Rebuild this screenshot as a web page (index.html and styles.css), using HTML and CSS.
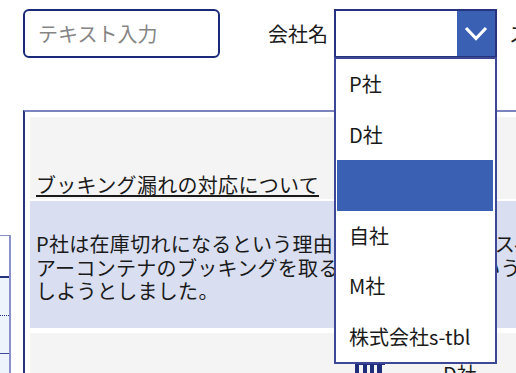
FILE: index.html
```html
<!DOCTYPE html>
<html lang="ja">
<head>
    <meta charset="UTF-8">
    <meta name="viewport" content="width=device-width, initial-scale=1.0">
    <title>ブッキング管理</title>
    <link rel="stylesheet" href="styles.css">
</head>
<body>
    <div class="topbar">
        <input type="text" class="text-input" placeholder="テキスト入力">
        <label class="field-label company-label">会社名</label>
        <div class="combo">
            <div class="combo-value"></div>
            <div class="combo-btn">
                <svg width="24" height="16" viewBox="0 0 24 16">
                    <polyline points="2,2 12,12.5 22,2" fill="none" stroke="#fff" stroke-width="3.2"/>
                </svg>
            </div>
            <!-- open dropdown -->
            <ul class="combo-list">
                <li>P社</li>
                <li>D社</li>
                <li class="selected"></li>
                <li>自社</li>
                <li>M社</li>
                <li>株式会社s-tbl</li>
            </ul>
        </div>
        <span class="field-label status-label">ステータス</span>
    </div>

    <div class="main">
        <div class="side-table">
            <div class="side-head"></div>
            <div class="side-row dotted"></div>
            <div class="side-row"></div>
            <div class="side-row"></div>
        </div>

        <div class="panel">
            <div class="card title-card">
                <span class="title">ブッキング漏れの対応について</span>
            </div>
            <div class="card body-card">
                <p>P社は在庫切れになるという理由で、事前に大量のスペ<br>アーコンテナのブッキングを取ることで枠確保という形で対応<br>しようとしました。</p>
            </div>
            <div class="card info-card">
                <svg class="bars" width="30" height="12" viewBox="0 0 30 12">
                    <rect x="0" y="0" width="30" height="2" fill="#1f2d7a"/>
                    <rect x="0" y="0" width="4" height="12" fill="#1f2d7a"/>
                    <rect x="8" y="0" width="4" height="12" fill="#1f2d7a"/>
                    <rect x="15" y="0" width="4" height="12" fill="#1f2d7a"/>
                    <rect x="22" y="0" width="5" height="12" fill="#1f2d7a"/>
                </svg>
                <span class="info-name">D社</span>
            </div>
        </div>
    </div>
</body>
</html>
```

FILE: styles.css
```css
body {
    margin: 0;
    padding: 0;
    font-family: "Noto Sans CJK JP", "Noto Sans", sans-serif;
    color: #1a1a1a;
    background-color: #fff;
    overflow: hidden;
    width: 516px;
    height: 373px;
}

.topbar {
    display: flex;
    align-items: center;
    padding: 9px 0 0 23px;
    height: 49px;
    white-space: nowrap;
}
.topbar > * {
    flex-shrink: 0;
}
.text-input {
    width: 197px;
    height: 49px;
    box-sizing: border-box;
    border: 2px solid #1b2a78;
    border-radius: 6px;
    padding: 0 0 0 13px;
    font-family: inherit;
    font-size: 20px;
    color: #222;
    outline: none;
}
.text-input::placeholder {
    color: #858585;
}
.field-label {
    font-size: 20px;
    line-height: 24px;
    color: #1a1a1a;
}
.company-label {
    margin-left: 48px;
    margin-right: 6px;
}
.status-label {
    margin-left: 12px;
}

.combo {
    position: relative;
    display: flex;
    width: 163px;
    height: 49px;
    box-sizing: border-box;
    border: 2px solid #27337f;
    background-color: #fff;
}
.combo-value {
    flex: 1;
}
.combo-btn {
    width: 38px;
    background-color: #3a60b4;
    display: flex;
    align-items: center;
    justify-content: center;
}
.combo-list {
    position: absolute;
    top: 46px;
    left: -2px;
    width: 163px;
    box-sizing: border-box;
    margin: 0;
    padding: 0 2px 0 1px;
    list-style: none;
    background-color: #fff;
    border: 2px solid #3c4796;
    z-index: 10;
}
.combo-list li {
    height: 50.5px;
    line-height: 50px;
    padding-left: 12px;
    font-size: 20px;
    color: #1a1a1a;
}
.combo-list li.selected {
    background-color: #3a60b4;
}

.main {
    display: flex;
    align-items: flex-start;
    margin-top: 52px;
}
.side-table {
    flex-shrink: 0;
    width: 100px;
    box-sizing: border-box;
    margin-left: -89px;
    margin-top: 125px;
    border-top: 1px solid #8a90c8;
    border-right: 2px solid #8a90c8;
}
.side-head {
    height: 40px;
    background-color: #fff;
    border-bottom: 2px solid #27337f;
}
.side-row {
    height: 37px;
    background-color: #eef4fc;
    border-bottom: 1px solid #3b4a9a;
}
.side-row.dotted {
    border-bottom: 1px dotted #27337f;
}

.panel {
    flex-shrink: 0;
    width: 640px;
    height: 300px;
    margin-left: 12px;
    border-top: 2px solid #7c84c0;
    border-left: 2px solid #27337f;
    padding: 5px 0 0 5px;
    box-sizing: border-box;
}
.card {
    background-color: #f4f4f4;
    padding: 0 6px;
}
.title-card {
    height: 82px;
    display: flex;
    align-items: flex-end;
    box-sizing: border-box;
    padding-bottom: 2px;
}
.title {
    font-size: 20px;
    line-height: 24px;
    letter-spacing: 0.3px;
    text-decoration: underline;
    text-decoration-thickness: 2px;
    text-underline-offset: 2px;
}
.body-card {
    margin-top: 2px;
    height: 127px;
    box-sizing: border-box;
    background-color: #d9dff0;
    padding-top: 31px;
}
.body-card p {
    margin: 0;
    font-size: 20px;
    line-height: 23.5px;
    letter-spacing: 0.3px;
    white-space: nowrap;
}
.info-card {
    margin-top: 5px;
    height: 60px;
    box-sizing: border-box;
    padding: 29px 0 0 325px;
    display: flex;
    align-items: flex-start;
}
.bars {
    margin-top: 1px;
}
.info-name {
    margin-left: 58px;
    font-size: 20px;
    line-height: 24px;
}
```
